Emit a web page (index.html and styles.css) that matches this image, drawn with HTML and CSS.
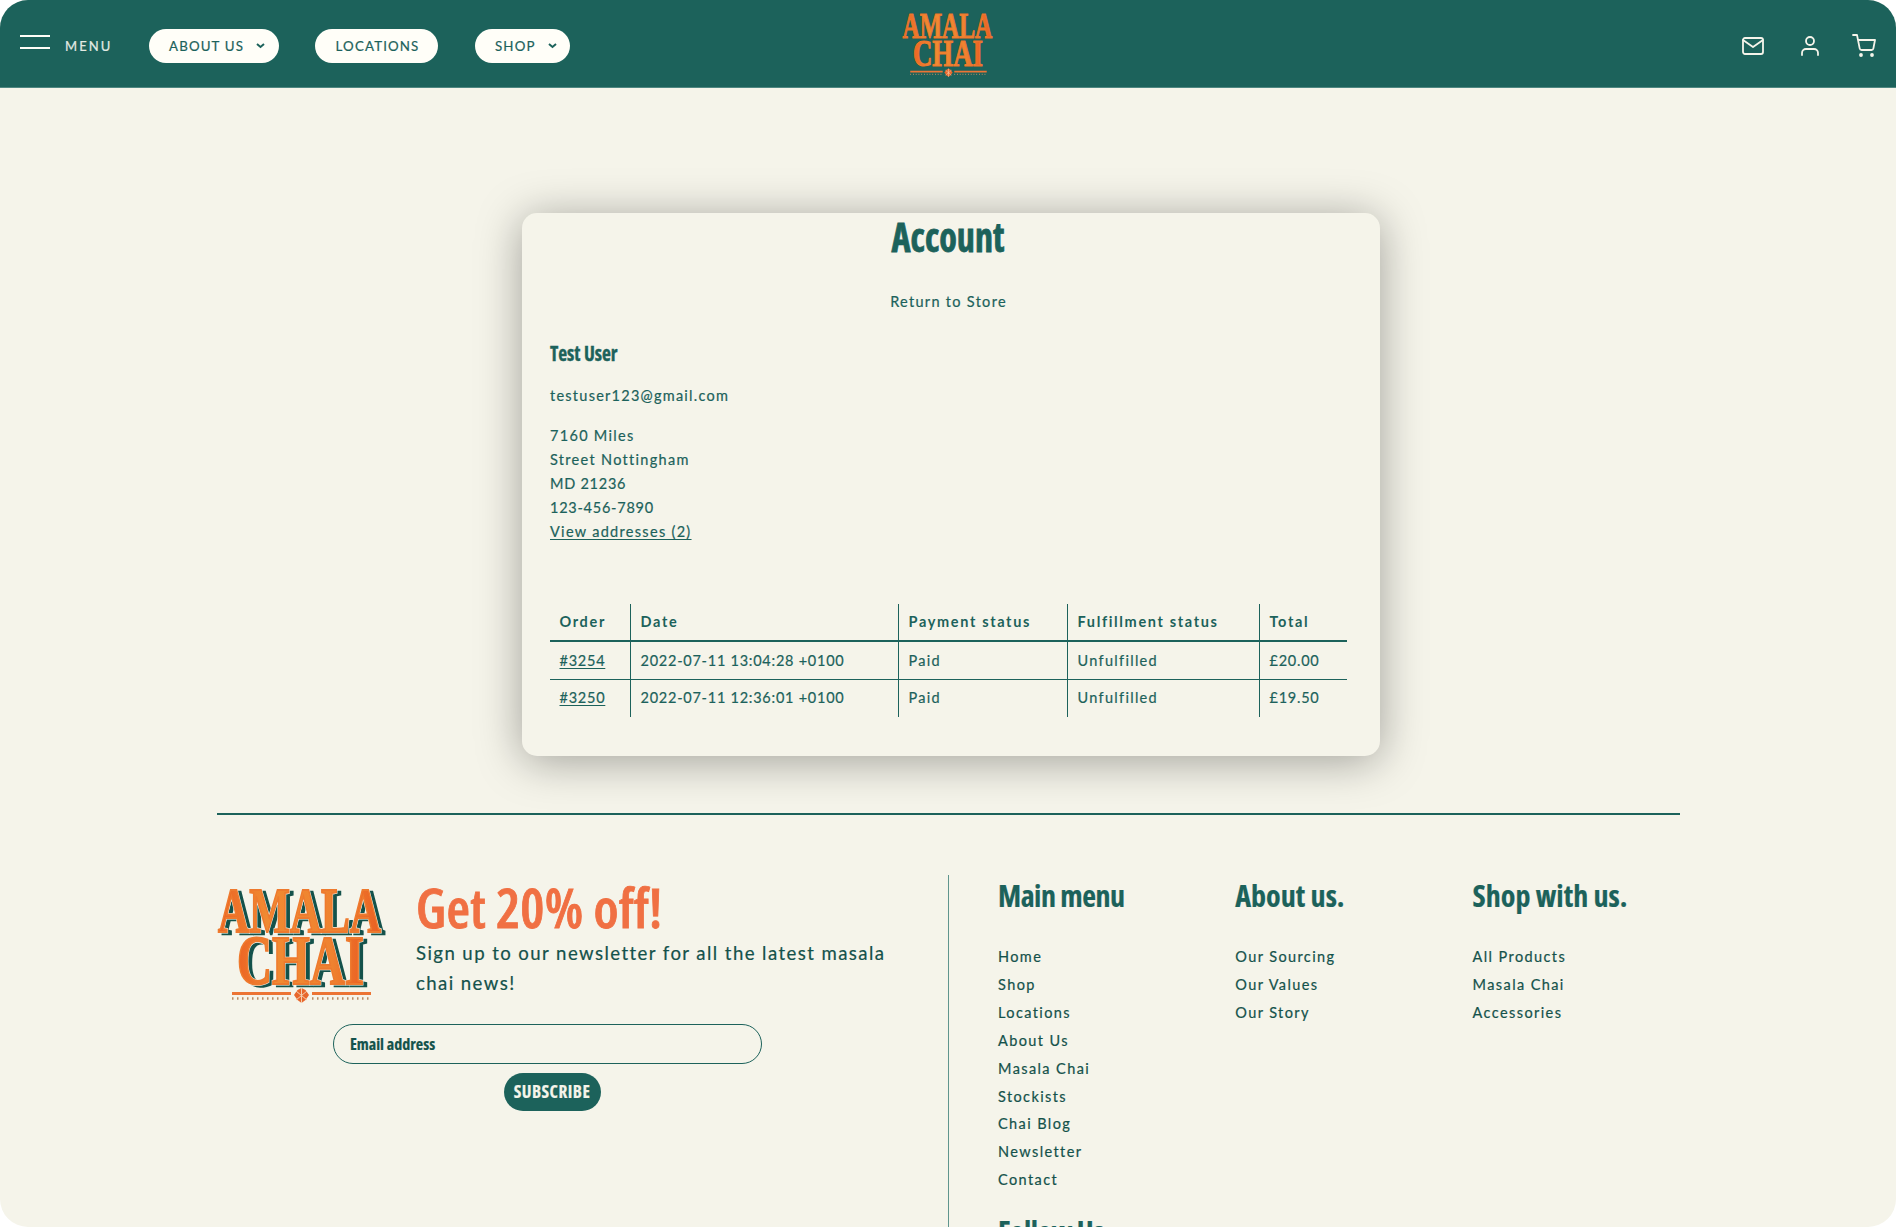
FILE: index.html
```html
<!DOCTYPE html>
<html lang="en">
<head>
<meta charset="utf-8">
<title>Account – Amala Chai</title>
<link rel="stylesheet" href="styles.css">
</head>
<body>
<svg class="defs" aria-hidden="true">
  <defs>
    <linearGradient id="spice" x1="0" y1="0" x2="1" y2="0">
      <stop offset="0" stop-color="#ec6424"/><stop offset=".3" stop-color="#f08a32"/>
      <stop offset=".75" stop-color="#ef8230"/><stop offset="1" stop-color="#ea5f22"/>
    </linearGradient>
    <g id="letters">
      <text x="1" y="43" font-size="64" textLength="163" lengthAdjust="spacingAndGlyphs">AMALA</text>
      <text x="20" y="95" font-size="70" textLength="127" lengthAdjust="spacingAndGlyphs">CHAI</text>
    </g>
    <g id="band">
      <path d="M15 104.500H74M95 104.500H154" stroke="#ec7434" stroke-width="3"/>
      <path class="fringe" d="M15 109.500H75M95 109.500H155" stroke-width="2.500" stroke-dasharray="1.500 3.500"/>
      <path d="M84.500 99l4 2 3.500 5-3.500 5-4 3-4-3-3.500-5 3.500-5z" fill="#e8672c"/>
      <path class="petal" d="M79 102l11 9M90 102l-11 9M84.500 99v15" stroke-width="1"/>
    </g>
  </defs>
</svg>
<div class="page">
  <header class="header">
    <div class="header-left">
      <span class="burger"></span>
      <span class="menu-label">MENU</span>
      <nav class="pills">
        <a class="pill">ABOUT US <svg width="9" height="6" viewBox="0 0 9 6"><path d="M1 1l3.500 3L8 1"/></svg></a>
        <a class="pill">LOCATIONS</a>
        <a class="pill">SHOP <svg width="9" height="6" viewBox="0 0 9 6"><path d="M1 1l3.500 3L8 1"/></svg></a>
      </nav>
    </div>
    <svg class="logo logo-small" viewBox="0 0 169 114">
      <use href="#letters" class="shade"/><use href="#letters" class="face"/><use href="#band"/>
    </svg>
    <div class="header-icons">
      <svg viewBox="0 0 24 24"><path d="M4 4h16c1.100 0 2 .9 2 2v12c0 1.100-.9 2-2 2H4c-1.100 0-2-.9-2-2V6c0-1.100.9-2 2-2z"/><path d="M22 6l-10 7L2 6"/></svg>
      <svg viewBox="0 0 24 24"><path d="M20 21v-2a4 4 0 0 0-4-4H8a4 4 0 0 0-4 4v2"/><circle cx="12" cy="7" r="4"/></svg>
      <svg viewBox="0 0 24 24"><circle cx="9" cy="21" r="1"/><circle cx="20" cy="21" r="1"/><path d="M1 1h4l2.680 13.390a2 2 0 0 0 2 1.610h9.720a2 2 0 0 0 2-1.610L23 6H6"/></svg>
    </div>
  </header>

  <main class="card">
    <h1>Account</h1>
    <a class="return">Return to Store</a>
    <h2>Test User</h2>
    <p class="email">testuser123@gmail.com</p>
    <p class="address">7160 Miles<br>Street Nottingham<br><span class="digits">MD 21236<br>123-456-7890</span><br><a class="link">View addresses (2)</a></p>
    <table class="orders">
      <colgroup><col class="c-order"><col class="c-date"><col class="c-pay"><col class="c-ful"><col></colgroup>
      <thead><tr><th>Order</th><th>Date</th><th>Payment status</th><th>Fulfillment status</th><th>Total</th></tr></thead>
      <tbody>
        <tr><td><a class="link digits">#3254</a></td><td class="digits">2022-07-11 13:04:28 +0100</td><td>Paid</td><td>Unfulfilled</td><td class="digits">£20.00</td></tr>
        <tr><td><a class="link digits">#3250</a></td><td class="digits">2022-07-11 12:36:01 +0100</td><td>Paid</td><td>Unfulfilled</td><td class="digits">£19.50</td></tr>
      </tbody>
    </table>
  </main>

  <footer class="footer">
    <section class="newsletter">
      <div class="promo">
        <svg class="logo logo-large" viewBox="0 0 169 114">
          <use href="#letters" class="shade" x="4" y="2"/><use href="#letters" class="halo"/><use href="#letters" class="face"/><use href="#band"/>
        </svg>
        <div>
          <h2 class="offer">Get 20% off!</h2>
          <p class="pitch">Sign up to our newsletter for all the latest masala chai news!</p>
        </div>
      </div>
      <div class="field">Email address</div>
      <div class="subscribe">SUBSCRIBE</div>
    </section>
    <nav class="columns">
      <div>
        <h3 class="tight">Main menu</h3>
        <ul><li>Home</li><li>Shop</li><li>Locations</li><li>About Us</li><li>Masala Chai</li><li>Stockists</li><li>Chai Blog</li><li>Newsletter</li><li>Contact</li></ul>
        <h3 class="tight follow">Follow Us</h3>
      </div>
      <div>
        <h3>About us.</h3>
        <ul><li>Our Sourcing</li><li>Our Values</li><li>Our Story</li></ul>
      </div>
      <div>
        <h3>Shop with us.</h3>
        <ul><li>All Products</li><li>Masala Chai</li><li>Accessories</li></ul>
      </div>
    </nav>
  </footer>
</div>
</body>
</html>
```
FILE: styles.css
```css
* { box-sizing: border-box; margin: 0; padding: 0; }
:root { --green: #1c625b; --deep: #14524b; --cream: #f5f4ea; --orange: #f07043; }
html { background: #fff; }
body {
  font-family: Lato, sans-serif;
  font-size: 14.5px;
  line-height: 24px;
  letter-spacing: 1.3px;
  color: var(--green);
  -webkit-text-stroke: .2px currentColor;
}
.defs { position: absolute; width: 0; height: 0; }
.page { height: 1227px; overflow: hidden; border-radius: 28px; background: var(--cream); }
h1, h2, h3, .field, .subscribe { font-family: "Open Sans", sans-serif; font-stretch: 75%; font-weight: 700; letter-spacing: 0; }
.digits { letter-spacing: .75px; }

/* header */
.header {
  height: 88px;
  display: grid;
  grid-template-columns: 1fr auto 1fr;
  align-items: center;
  padding: 0 20px;
  background: var(--green);
  border-bottom: 1px solid #4f8781;
}
.header-left { display: flex; align-items: center; padding-top: 4px; }
.burger { width: 30px; height: 14px; margin-top: -8px; border: solid #fffef8; border-width: 2px 0; }
.menu-label { width: 83.5px; margin-left: 15px; font-size: 13px; letter-spacing: 2.1px; color: #e3ebe4; }
.pills { display: flex; gap: 36.500px; }
.pill {
  display: flex;
  align-items: center;
  height: 34px;
  padding: 0 18.500px 0 20.500px;
  border-radius: 17px;
  background: #fffef8;
  font-size: 13.3px;
  letter-spacing: 1.15px;
}
.pill svg { margin: 0 -5px 0 12px; fill: none; stroke: var(--green); stroke-width: 2; }
.header-icons { display: flex; justify-content: flex-end; gap: 31px; padding-top: 4px; }
.header-icons svg { width: 24px; height: 24px; fill: none; stroke: #f5f4ea; stroke-width: 1.8; stroke-linecap: round; stroke-linejoin: round; }
.header-icons svg:nth-child(2) { margin: 0 -1px 0 2px; }

/* logo */
.logo { overflow: visible; font-family: "Liberation Serif", serif; font-weight: 700; letter-spacing: 0; }
.logo-small { width: 93px; height: 63px; margin-top: 3px; }
.logo-large { width: 169px; height: 114px; margin-top: 14px; flex: none; }
.face { fill: url(#spice); stroke: #ee7a2e; stroke-width: 2; }
.halo { fill: none; stroke: var(--cream); stroke-width: 3.2; }
.shade { fill: var(--deep); stroke: var(--deep); stroke-width: 2.6; }
.fringe { stroke: #b98a62; }
.petal { stroke: #f3cfae; }

/* account card */
.card {
  width: 858px;
  height: 543px;
  margin: 125px 0 0 522px;
  padding: 0 28px;
  border-radius: 15px;
  background: var(--cream);
  box-shadow: 0 5px 45px rgba(0, 0, 0, .35);
}
h1 { width: 796px; text-align: center; font-size: 41px; line-height: 46px; transform: scaleX(.88); -webkit-text-stroke: .8px var(--green); }
.return { display: block; width: 797px; margin-top: 31px; text-align: center; }
.card h2 { width: max-content; margin-top: 24.6px; font-size: 21px; line-height: 28px; transform: scaleX(.92); transform-origin: left; -webkit-text-stroke: .4px var(--green); }
.email { margin-top: 17.4px; letter-spacing: 1.25px; }
.address { margin-top: 16px; }
.link { text-decoration: underline; text-underline-offset: 2px; }
.orders { width: 797px; margin-top: 60px; table-layout: fixed; border-collapse: separate; border-spacing: 0; }
.c-order { width: 81px; } .c-date { width: 268px; } .c-pay { width: 169px; } .c-ful { width: 192px; }
.orders th, .orders td { height: 37px; padding: 0 0 0 9.5px; text-align: left; white-space: nowrap; border-right: 1px solid var(--green); }
.orders th:last-child, .orders td:last-child { border-right: 0; }
.orders th { height: 38px; font-weight: 700; letter-spacing: 1.65px; -webkit-text-stroke: 0; border-bottom: 2px solid var(--green); }
.orders tr:first-child td { height: 38px; padding-top: 2px; border-bottom: 1px solid var(--green); }

/* footer */
.footer {
  width: 1463px;
  margin: 57px 0 0 217px;
  padding-top: 60px;
  display: grid;
  grid-template-columns: 731px 1fr;
  border-top: 2px solid var(--green);
  color: var(--deep);
}
.newsletter { height: 352px; }
.promo { display: flex; gap: 30px; }
.offer { margin-top: 2px; font-size: 54px; line-height: 60px; font-weight: 600; letter-spacing: .25px; color: var(--orange); white-space: nowrap; -webkit-text-stroke: .8px var(--orange); }
.pitch { width: 490px; margin-top: 2px; font-size: 18.6px; line-height: 29.500px; letter-spacing: 1.42px; }
.field {
  width: 429px;
  height: 40px;
  margin: 20.500px 0 0 116px;
  padding: 0 16px;
  border: 1px solid var(--green);
  border-radius: 20px;
  font-size: 16px;
  line-height: 38px;
}
.subscribe {
  width: 97px;
  height: 38px;
  margin: 9px 0 0 286.500px;
  border-radius: 19px;
  background: var(--green);
  color: var(--cream);
  text-align: center;
  font-size: 17.3px;
  line-height: 37px;
  letter-spacing: .5px;
}
.columns { display: grid; grid-template-columns: repeat(3, 237.3px); padding-left: 49px; border-left: 1px solid #5f958d; }
h3 { margin-top: 3px; font-size: 30px; line-height: 36px; color: var(--green); white-space: nowrap; }
h3.tight { letter-spacing: -.5px; }
.columns ul { margin-top: 29px; list-style: none; line-height: 27.9px; letter-spacing: 1.4px; }
.columns .follow { margin-top: 20px; }
```
